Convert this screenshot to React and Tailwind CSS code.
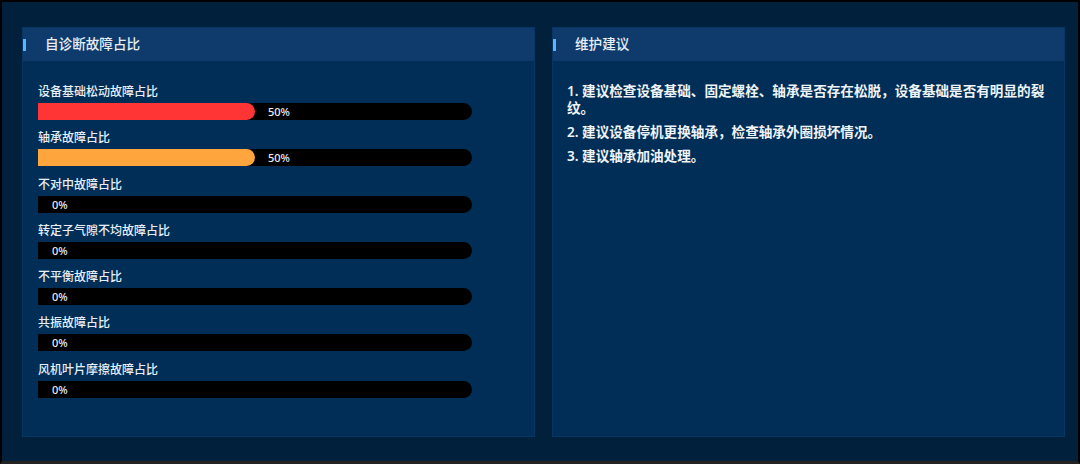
import React from "react";

const faults = [
  { label: "设备基础松动故障占比", value: 50, color: "bg-[#ff3535]" },
  { label: "轴承故障占比", value: 50, color: "bg-[#ffa53e]" },
  { label: "不对中故障占比", value: 0, color: "bg-[#ff3535]" },
  { label: "转定子气隙不均故障占比", value: 0, color: "bg-[#ff3535]" },
  { label: "不平衡故障占比", value: 0, color: "bg-[#ff3535]" },
  { label: "共振故障占比", value: 0, color: "bg-[#ff3535]" },
  { label: "风机叶片摩擦故障占比", value: 0, color: "bg-[#ff3535]" },
];

const advice = [
  "1. 建议检查设备基础、固定螺栓、轴承是否存在松脱，设备基础是否有明显的裂纹。",
  "2. 建议设备停机更换轴承，检查轴承外圈损坏情况。",
  "3. 建议轴承加油处理。",
];

const PanelHeader = ({ title }) => (
  <div className="flex items-center h-[33px] bg-[#0e3b6b]">
    <div className="w-[3px] h-[12px] bg-[#5ab4ff]" />
    <span className="ml-[19px] text-[13.6px] font-medium text-[#e8eef6]">{title}</span>
  </div>
);

const FaultBar = ({ label, value, color }) => (
  <div className="flex flex-col">
    <div className="h-[17px] leading-[17px] text-[12px] font-medium text-[#e8eef6]">{label}</div>
    <div className="relative mt-[3px] h-[17px] w-[434px] bg-black rounded-r-full">
      {value > 0 && (
        <div className={`h-full rounded-r-full ${color}`} style={{ width: `${value}%` }} />
      )}
      <span
        className="absolute top-0 h-[17px] leading-[17px] text-[11px] font-medium text-[#e8eef6]"
        style={{ left: `calc(${value}% + ${value > 0 ? 13 : 14}px)` }}
      >
        {value}%
      </span>
    </div>
  </div>
);

export default function App() {
  return (
    <div
      className="w-[1080px] h-[464px] bg-[#00203b] border-2 border-black border-b-[3px] border-b-[#222] flex pt-[25px] pb-[24px] pl-[20px] pr-[13px] gap-[17px]"
      style={{ fontFamily: '"Noto Sans", "Noto Sans CJK SC", sans-serif' }}
    >
      <div className="w-[513px] flex flex-col bg-[#002e56] border border-[#073663]">
        <PanelHeader title="自诊断故障占比" />
        <div className="flex flex-col gap-[9.3px] pt-[22px] pl-[15px]">
          {faults.map((f) => (
            <FaultBar key={f.label} {...f} />
          ))}
        </div>
      </div>
      <div className="flex-1 flex flex-col bg-[#002e56] border border-[#073663]">
        <PanelHeader title="维护建议" />
        <div className="flex flex-col gap-[7px] pt-[21px] pl-[14px] pr-[8px]">
          {advice.map((a) => (
            <p key={a} className="text-[13.6px] leading-[17px] font-semibold text-[#eef3f8]">
              {a}
            </p>
          ))}
        </div>
      </div>
    </div>
  );
}
